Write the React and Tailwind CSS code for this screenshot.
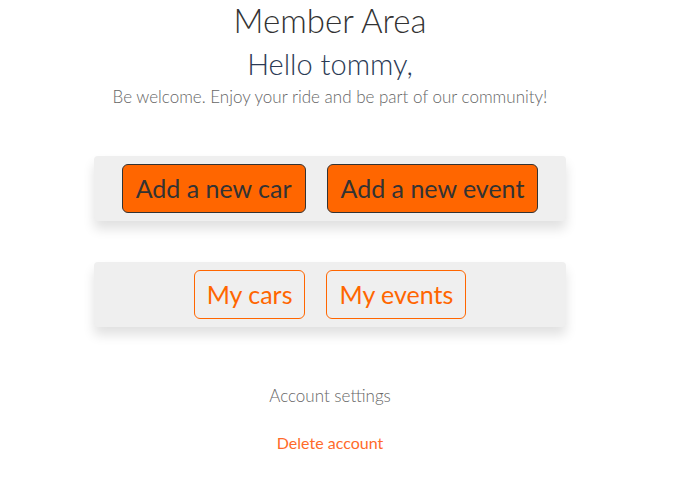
export default function App() {
  return (
    <div className="w-[660px] min-h-[485px] bg-white flex flex-col items-center font-['Lato','Noto_Sans',sans-serif] font-light">
      <h1 className="mt-[2px] text-[33px] leading-[36px] text-[#333]">Member Area</h1>
      <h2 className="mt-[9px] text-[29px] leading-[34px] text-[#2b3a55]">Hello tommy,</h2>
      <p className="mt-[6px] text-[17px] leading-[20px] text-[#666]">
        Be welcome. Enjoy your ride and be part of our community!
      </p>

      {/* actions */}
      <div className="mt-[49px] w-[472px] h-[65px] bg-[#efefef] rounded flex items-center justify-center gap-[21px] shadow-[0_8px_12px_rgba(0,0,0,0.12)]">
        <button className="h-[49px] px-[13px] bg-[#ff6600] border border-[#333] rounded-[6px] text-[25px] text-[#333] font-normal">
          Add a new car
        </button>
        <button className="h-[49px] px-[13px] bg-[#ff6600] border border-[#333] rounded-[6px] text-[25px] text-[#333] font-normal">
          Add a new event
        </button>
      </div>

      <div className="mt-[41px] w-[472px] h-[65px] bg-[#efefef] rounded flex items-center justify-center gap-[21px] shadow-[0_8px_12px_rgba(0,0,0,0.12)]">
        <button className="h-[49px] px-[12px] border border-[#ff6600] rounded-[6px] text-[25px] text-[#ff6600] font-normal">
          My cars
        </button>
        <button className="h-[49px] px-[12px] border border-[#ff6600] rounded-[6px] text-[25px] text-[#ff6600] font-normal">
          My events
        </button>
      </div>

      <a className="mt-[59px] text-[17px] leading-[20px] text-[#666]">Account settings</a>
      <a className="mt-[27px] text-[16px] leading-[20px] text-[#ff6a2a] font-normal">Delete account</a>
    </div>
  );
}
